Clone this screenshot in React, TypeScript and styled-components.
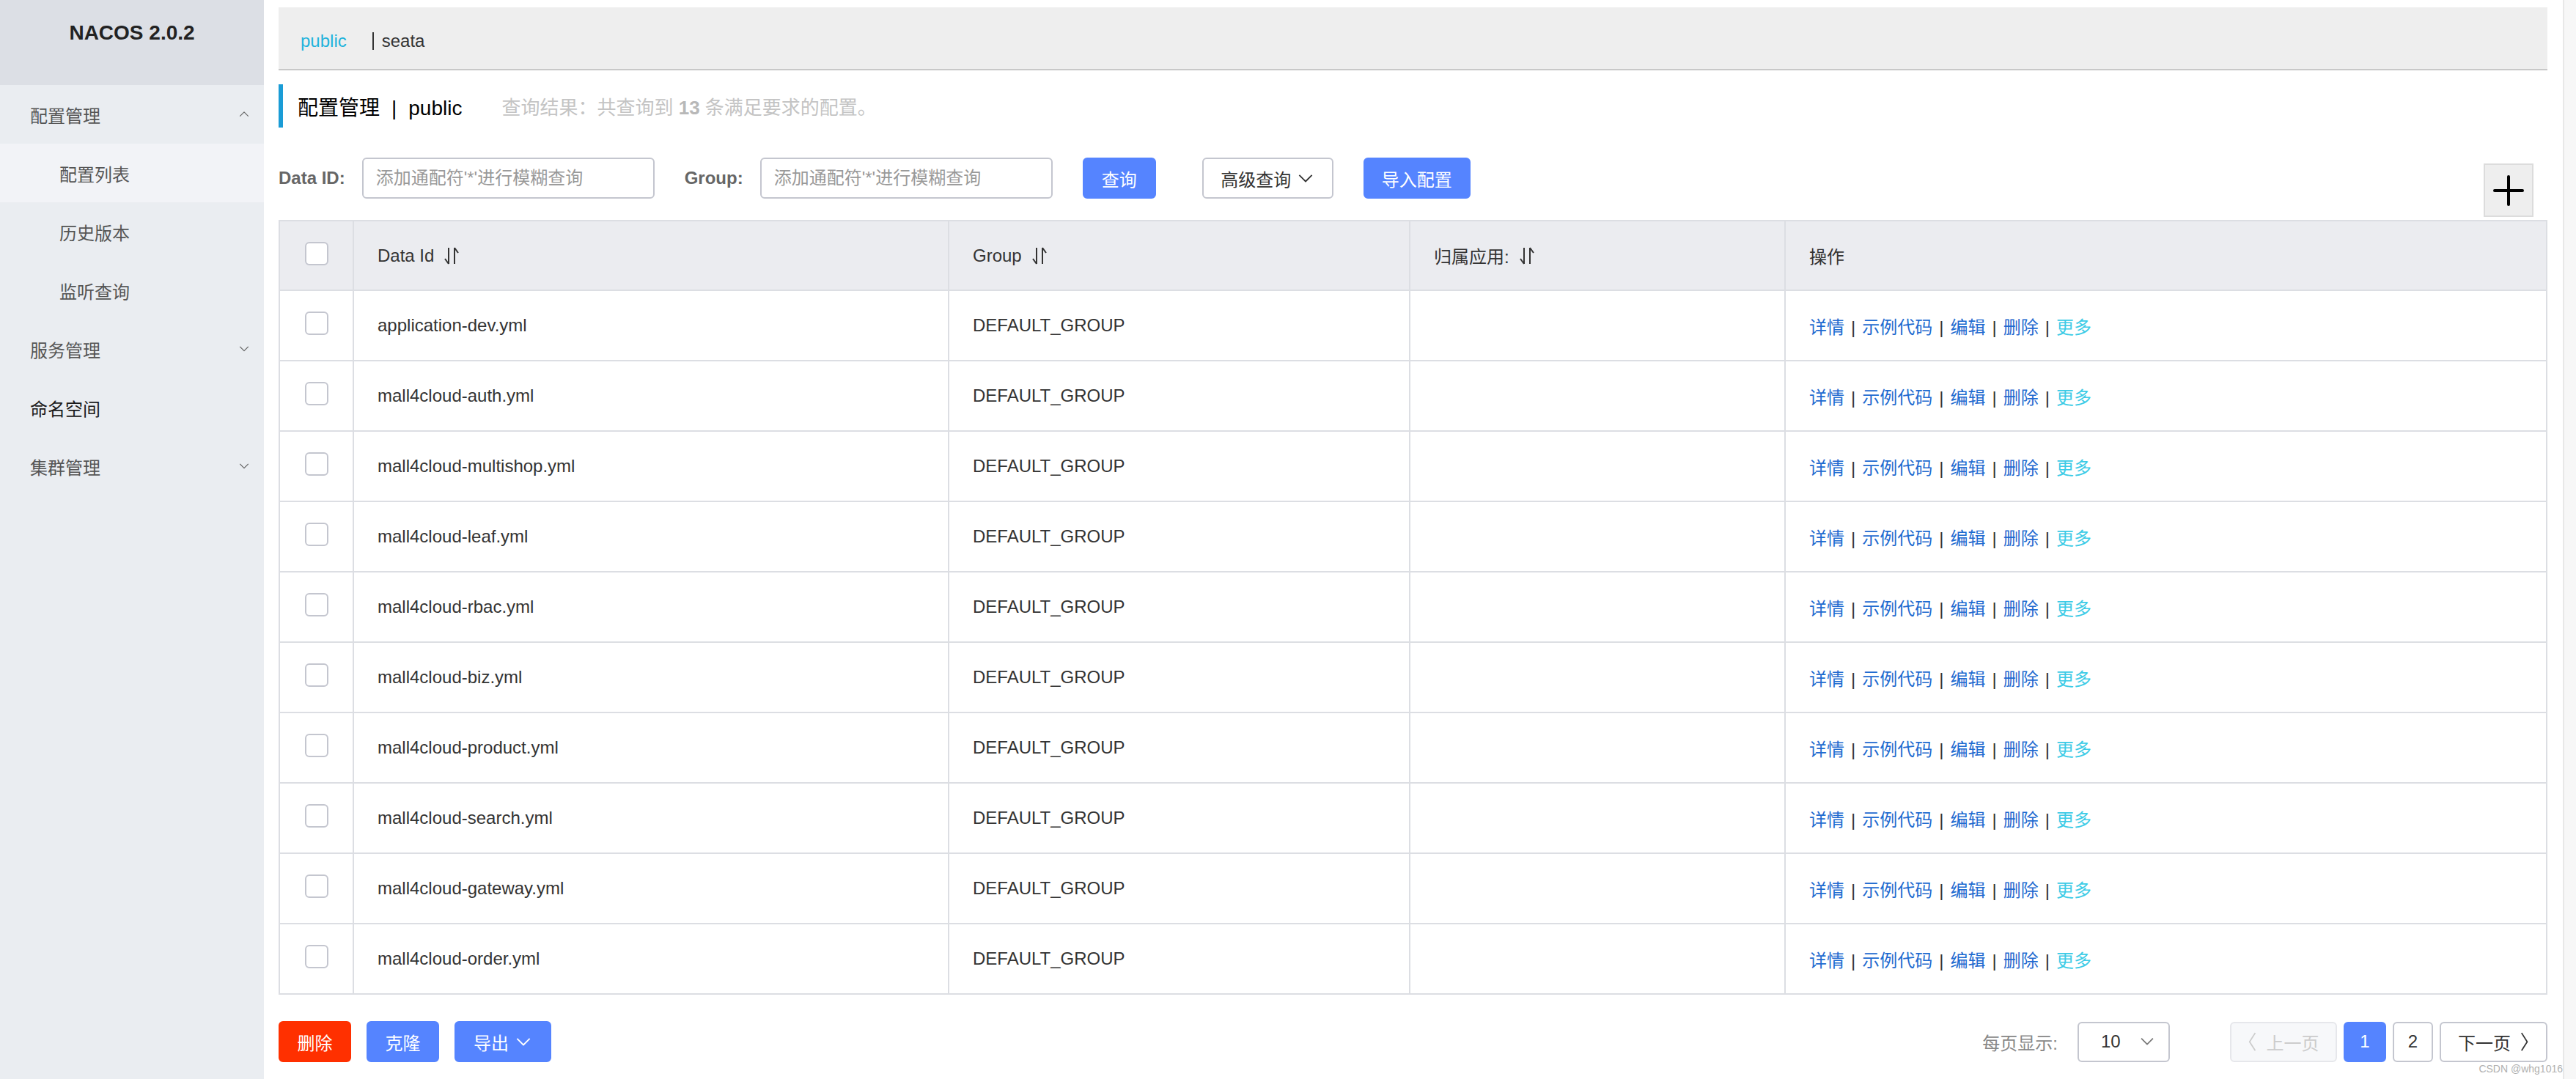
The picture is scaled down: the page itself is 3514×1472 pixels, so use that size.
import styled, { createGlobalStyle } from "styled-components";

const GlobalStyle = createGlobalStyle`
  html, body {
    margin: 0;
    padding: 0;
    background: #ffffff;
  }
  body {
    font-family: "Liberation Sans", "Noto Sans CJK SC", sans-serif;
    color: #333333;
  }
  * {
    box-sizing: border-box;
  }
`;

const rows = [
  "application-dev.yml",
  "mall4cloud-auth.yml",
  "mall4cloud-multishop.yml",
  "mall4cloud-leaf.yml",
  "mall4cloud-rbac.yml",
  "mall4cloud-biz.yml",
  "mall4cloud-product.yml",
  "mall4cloud-search.yml",
  "mall4cloud-gateway.yml",
  "mall4cloud-order.yml",
];

const Chevron = ({ dir, size = 14 }: { dir: "up" | "down" | "left" | "right"; size?: number }) => {
  const points = {
    up: "1,8 7,2 13,8",
    down: "1,2 7,8 13,2",
    left: "9,1 2,12 9,23",
    right: "2,1 9,12 2,23",
  }[dir];
  const vertical = dir === "left" || dir === "right";
  return (
    <svg
      width={vertical ? size * 0.6 : size}
      height={vertical ? size * 1.2 : size * 0.6}
      viewBox={vertical ? "0 0 11 24" : "0 0 14 10"}
      fill="none"
      stroke="currentColor"
      strokeWidth={vertical ? 1.6 : 1.3}
      strokeLinejoin="round"
    >
      <polyline points={points} />
    </svg>
  );
};

const SortIcon = () => (
  <svg width="24" height="26" viewBox="0 0 24 26" fill="none" stroke="#333" strokeWidth="2">
    <line x1="8" y1="2" x2="8" y2="24" />
    <line x1="8" y1="24" x2="3" y2="17" />
    <line x1="16" y1="2" x2="16" y2="24" />
    <line x1="16" y1="2" x2="21" y2="9" />
  </svg>
);

const PlusIcon = () => (
  <svg width="42" height="42" viewBox="0 0 42 42" stroke="#000" strokeWidth="4" strokeLinecap="round">
    <line x1="21" y1="2" x2="21" y2="40" />
    <line x1="2" y1="21" x2="40" y2="21" />
  </svg>
);

const App = () => {
  return (
    <Page>
      <GlobalStyle />
      <Sidebar>
        <Logo>NACOS 2.0.2</Logo>
        <Menu>
          <MenuItem>
            <span>配置管理</span>
            <MenuArrow><Chevron dir="up" size={16} /></MenuArrow>
          </MenuItem>
          <SubItem $active>配置列表</SubItem>
          <SubItem>历史版本</SubItem>
          <SubItem>监听查询</SubItem>
          <MenuItem>
            <span>服务管理</span>
            <MenuArrow><Chevron dir="down" size={16} /></MenuArrow>
          </MenuItem>
          <MenuItem $dark>
            <span>命名空间</span>
          </MenuItem>
          <MenuItem>
            <span>集群管理</span>
            <MenuArrow><Chevron dir="down" size={16} /></MenuArrow>
          </MenuItem>
        </Menu>
      </Sidebar>

      <Main>
        <NamespaceBar>
          <NamespaceTab $current>public</NamespaceTab>
          <NamespaceTab $divider>seata</NamespaceTab>
        </NamespaceBar>

        <TitleRow>
          <Title>
            配置管理<TitleSep>|</TitleSep>public
          </Title>
          <TitleDesc>
            查询结果：共查询到 <b>13</b> 条满足要求的配置。
          </TitleDesc>
        </TitleRow>

        <SearchRow>
          <FormItem>
            <FormLabel>Data ID:</FormLabel>
            <SearchInput placeholder="添加通配符'*'进行模糊查询" />
          </FormItem>
          <FormItem>
            <FormLabel>Group:</FormLabel>
            <SearchInput placeholder="添加通配符'*'进行模糊查询" />
          </FormItem>
          <Button $variant="primary" $width={100}>查询</Button>
          <Button $variant="normal" $width={179} $offset={22}>
            高级查询 <Chevron dir="down" size={24} />
          </Button>
          <Button $variant="primary" $width={146}>导入配置</Button>
          <AddButton>
            <PlusIcon />
          </AddButton>
        </SearchRow>

        <Table>
          <colgroup>
            <col style={{ width: 101 }} />
            <col style={{ width: 812 }} />
            <col style={{ width: 629 }} />
            <col style={{ width: 512 }} />
            <col />
          </colgroup>
          <thead>
            <tr>
              <Th $center><Checkbox /></Th>
              <Th><HeadCell>Data Id <SortIcon /></HeadCell></Th>
              <Th><HeadCell>Group <SortIcon /></HeadCell></Th>
              <Th><HeadCell>归属应用: <SortIcon /></HeadCell></Th>
              <Th>操作</Th>
            </tr>
          </thead>
          <tbody>
            {rows.map((name) => (
              <tr key={name}>
                <Td $center><Checkbox /></Td>
                <Td>{name}</Td>
                <Td>DEFAULT_GROUP</Td>
                <Td />
                <Td>
                  <ActionLink>详情</ActionLink>
                  <ActionSep>|</ActionSep>
                  <ActionLink>示例代码</ActionLink>
                  <ActionSep>|</ActionSep>
                  <ActionLink>编辑</ActionLink>
                  <ActionSep>|</ActionSep>
                  <ActionLink>删除</ActionLink>
                  <ActionSep>|</ActionSep>
                  <ActionLink $more>更多</ActionLink>
                </Td>
              </tr>
            ))}
          </tbody>
        </Table>

        <Footer>
          <BatchActions>
            <Button $variant="danger" $width={99}>删除</Button>
            <Button $variant="primary" $width={99}>克隆</Button>
            <Button $variant="primary" $width={132}>
              导出 <Chevron dir="down" size={24} />
            </Button>
          </BatchActions>
          <Pagination>
            <PageSizeLabel>每页显示:</PageSizeLabel>
            <PageSizeSelect>
              <span>10</span>
              <Chevron dir="down" size={22} />
            </PageSizeSelect>
            <PageButtons>
              <PageButton $disabled $width={146}>
                <Chevron dir="left" size={22} /> 上一页
              </PageButton>
              <PageButton $active $width={58}>1</PageButton>
              <PageButton $width={55}>2</PageButton>
              <PageButton $width={147}>
                下一页 <Chevron dir="right" size={22} />
              </PageButton>
            </PageButtons>
          </Pagination>
        </Footer>
      </Main>

      <ScrollTrack />
      <Watermark>CSDN @whg1016</Watermark>
    </Page>
  );
};

const Page = styled.div`
  position: relative;
  display: flex;
  width: 100%;
  min-height: 100vh;
`;

const Sidebar = styled.aside`
  width: 360px;
  flex-shrink: 0;
  display: flex;
  flex-direction: column;
  background: #eaedf1;
`;

const Logo = styled.div`
  height: 116px;
  padding-top: 29px;
  background: #dcdfe5;
  text-align: center;
  font-size: 28px;
  line-height: 32px;
  font-weight: bold;
  color: #222;
`;

const Menu = styled.nav`
  display: flex;
  flex-direction: column;
`;

const MenuItem = styled.div<{ $dark?: boolean }>`
  height: 80px;
  padding: 0 19px 0 41px;
  display: flex;
  align-items: center;
  justify-content: space-between;
  font-size: 24px;
  color: ${(p) => (p.$dark ? "#1a1a1a" : "#555")};
`;

const MenuArrow = styled.span`
  display: flex;
  color: #666;
`;

const SubItem = styled.div<{ $active?: boolean }>`
  height: 80px;
  padding-left: 81px;
  display: flex;
  align-items: center;
  font-size: 24px;
  color: #555;
  background: ${(p) => (p.$active ? "#f2f3f7" : "transparent")};
`;

const Main = styled.main`
  flex: 1;
  min-width: 0;
  padding: 10px 21px 0 20px;
  display: flex;
  flex-direction: column;
`;

const NamespaceBar = styled.div`
  height: 86px;
  padding: 8px 0 0 30px;
  display: flex;
  align-items: center;
  background: #eeeeee;
  border-bottom: 2px solid #c8c8c8;
`;

const NamespaceTab = styled.span<{ $current?: boolean; $divider?: boolean }>`
  font-size: 24px;
  line-height: 24px;
  color: ${(p) => (p.$current ? "#1fb3dc" : "#333")};
  margin-right: ${(p) => (p.$current ? "35px" : "0")};
  padding-left: ${(p) => (p.$divider ? "11px" : "0")};
  border-left: ${(p) => (p.$divider ? "2px solid #333" : "none")};
`;

const TitleRow = styled.div`
  margin-top: 19px;
  height: 59px;
  padding-left: 20px;
  display: flex;
  align-items: center;
  border-left: 6px solid #1a9cd6;
`;

const Title = styled.h1`
  margin: 0;
  font-size: 28px;
  font-weight: normal;
  color: #000;
`;

const TitleSep = styled.span`
  margin: 0 16px;
`;

const TitleDesc = styled.span`
  margin-left: 54px;
  font-size: 26px;
  color: #c4c4c4;

  b {
    color: #b8b8b8;
  }
`;

const SearchRow = styled.div`
  margin-top: 41px;
  display: flex;
  align-items: flex-start;
  gap: 41px;
`;

const FormItem = styled.div`
  display: flex;
  align-items: center;
  gap: 23px;
  height: 56px;
`;

const FormLabel = styled.label`
  font-size: 24px;
  font-weight: bold;
  color: #666;
`;

const SearchInput = styled.input`
  width: 399px;
  height: 56px;
  padding: 0 17px;
  border: 2px solid #c4c6cf;
  border-radius: 6px;
  font-family: inherit;
  font-size: 24px;
  color: #333;
  outline: none;

  &::placeholder {
    color: #999;
  }
`;

const buttonColors = {
  primary: { bg: "#5584ff", border: "#5584ff", color: "#fff" },
  danger: { bg: "#ff3000", border: "#ff3000", color: "#fff" },
  normal: { bg: "#fff", border: "#c4c6cf", color: "#333" },
};

const Button = styled.button<{ $variant: keyof typeof buttonColors; $width: number; $offset?: number }>`
  width: ${(p) => p.$width}px;
  height: 56px;
  margin-left: ${(p) => p.$offset ?? 0}px;
  padding: 0;
  display: inline-flex;
  align-items: center;
  justify-content: center;
  gap: 8px;
  border: 2px solid ${(p) => buttonColors[p.$variant].border};
  border-radius: 6px;
  background: ${(p) => buttonColors[p.$variant].bg};
  color: ${(p) => buttonColors[p.$variant].color};
  font-family: inherit;
  font-size: 24px;
`;

const AddButton = styled.div`
  margin: 8px 19px 0 auto;
  width: 68px;
  height: 73px;
  display: flex;
  align-items: center;
  justify-content: center;
  background: #eeeeee;
  border: 2px solid #dcdcdc;
`;

const Table = styled.table`
  margin-top: 4px;
  width: 100%;
  border-collapse: collapse;
  table-layout: fixed;
  border: 2px solid #dcdee3;
`;

const Th = styled.th<{ $center?: boolean }>`
  height: 95px;
  padding: 0 ${(p) => (p.$center ? "0" : "32px")};
  text-align: ${(p) => (p.$center ? "center" : "left")};
  background: #ebecf0;
  border: 2px solid #dcdee3;
  font-size: 24px;
  font-weight: normal;
  color: #333;
`;

const HeadCell = styled.span`
  display: inline-flex;
  align-items: center;
  gap: 12px;
`;

const Td = styled.td<{ $center?: boolean }>`
  height: 96px;
  padding: 0 ${(p) => (p.$center ? "0" : "32px")};
  text-align: ${(p) => (p.$center ? "center" : "left")};
  border: 2px solid #dcdee3;
  font-size: 24px;
  color: #333;
  white-space: nowrap;
`;

const Checkbox = styled.span`
  display: inline-block;
  width: 32px;
  height: 32px;
  margin-bottom: 6px;
  vertical-align: middle;
  background: #fff;
  border: 2px solid #c4c6cf;
  border-radius: 6px;
`;

const ActionLink = styled.a<{ $more?: boolean }>`
  color: ${(p) => (p.$more ? "#3ccbe6" : "#1f6bd0")};
  text-decoration: none;
`;

const ActionSep = styled.span`
  margin: 0 9px;
  color: #333;
`;

const Footer = styled.div`
  margin-top: 36px;
  display: flex;
  align-items: center;
  justify-content: space-between;
`;

const BatchActions = styled.div`
  display: flex;
  gap: 21px;
`;

const Pagination = styled.div`
  display: flex;
  align-items: center;
`;

const PageSizeLabel = styled.span`
  font-size: 24px;
  color: #888;
`;

const PageSizeSelect = styled.div`
  margin-left: 27px;
  width: 126px;
  height: 55px;
  padding: 0 18px 0 30px;
  display: flex;
  align-items: center;
  justify-content: space-between;
  border: 2px solid #c4c6cf;
  border-radius: 6px;
  font-size: 24px;
  color: #333;

  svg {
    color: #777;
  }
`;

const PageButtons = styled.div`
  margin-left: 82px;
  display: flex;
  gap: 9px;
`;

const PageButton = styled.div<{ $width: number; $active?: boolean; $disabled?: boolean }>`
  width: ${(p) => p.$width}px;
  height: 55px;
  display: flex;
  align-items: center;
  justify-content: center;
  gap: 12px;
  border: 2px solid ${(p) => (p.$active ? "#5584ff" : p.$disabled ? "#e6e7eb" : "#c4c6cf")};
  border-radius: 6px;
  background: ${(p) => (p.$active ? "#5584ff" : p.$disabled ? "#f7f8fa" : "#fff")};
  color: ${(p) => (p.$active ? "#fff" : p.$disabled ? "#cccccc" : "#333")};
  font-size: 24px;
`;

const ScrollTrack = styled.div`
  width: 18px;
  flex-shrink: 0;
  background: #f7f7f7;
  border-left: 2px solid #e8e8e8;
`;

const Watermark = styled.span`
  position: absolute;
  right: 18px;
  bottom: 6px;
  font-size: 14px;
  color: #b0b0b0;
`;

export default App;
